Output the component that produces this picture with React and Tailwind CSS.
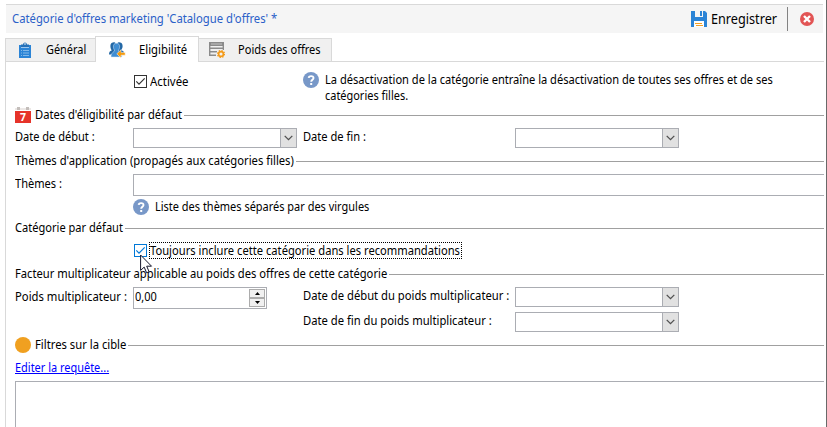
import { useLayoutEffect, useRef, useState } from "react";

// Single line of text, condensed horizontally so that it spans `w` pixels.
function T({ children, w, className = "", inner = "" }) {
  const ref = useRef(null);
  const [scale, setScale] = useState(1);
  useLayoutEffect(() => {
    setScale(w / ref.current.offsetWidth);
  }, []);
  return (
    <span className={`block shrink-0 whitespace-pre ${className}`} style={{ width: `${w}px` }}>
      <span ref={ref} className={`inline-block origin-left align-top ${inner}`} style={{ transform: `scaleX(${scale})` }}>
        {children}
      </span>
    </span>
  );
}

function Group({ title, w, icon }) {
  return (
    <div className="flex h-[17px] shrink-0 items-start gap-[2px]">
      {icon && <span className="mr-[2px] h-[17px] w-4 shrink-0">{icon}</span>}
      <T w={w}>{title}</T>
      <div className="mt-2 h-px flex-1 bg-[#a0a0a0]" />
    </div>
  );
}

function Combo() {
  return (
    <div className="flex h-5 w-[164px] shrink-0 justify-end border border-[#abadb3] bg-white">
      <div className="flex w-4 items-center justify-center border-l border-[#abadb3] bg-[#e1e1e1]">
        <svg width="9" height="6" viewBox="0 0 9 6" fill="none">
          <path d="M.7.9 4.5 4.6 8.3.9" stroke="#505050" strokeWidth="1.3" />
        </svg>
      </div>
    </div>
  );
}

function Help() {
  return (
    <svg className="shrink-0" width="16" height="16" viewBox="0 0 16 16" fill="none">
      <circle cx="8" cy="8" r="8" fill="#7898c8" />
      <path d="M5.7 5.9C5.8 3.7 10.5 3.4 10.5 6c0 1.7-2.3 1.8-2.3 3.8" stroke="#fff" strokeWidth="1.9" />
      <rect x="7.200" y="11" width="2" height="2" fill="#fff" />
    </svg>
  );
}

function Check({ box, mark }) {
  return (
    <svg className="shrink-0" width="13" height="13" viewBox="0 0 13 13" fill="none">
      <rect x=".5" y=".5" width="12" height="12" fill="#fff" stroke={box} />
      <path d="M2.300 6.400 5 9.100l5.700-5.800" stroke={mark} strokeWidth="1.200" />
    </svg>
  );
}

function Clipboard() {
  return (
    <svg width="12" height="16" viewBox="0 0 12 16">
      <path d="M0 3h12v13H0z" fill="#2b84d6" />
      <path d="M2 5V2.500h2C4.200-.3 7.800-.3 8 2.500h2V5z" fill="#2470b8" />
      <path d="M2 5.500h8" stroke="#cfe3f6" strokeWidth=".7" />
      <circle cx="6" cy="2" r=".8" fill="#fff" />
      <path d="M2 8.500h1M4 8.500h6M2 11h1M4 11h6M2 13.500h1M4 13.500h6" stroke="#8fc0ea" strokeWidth=".9" />
    </svg>
  );
}

function People() {
  return (
    <svg width="17" height="16" viewBox="0 0 17 16">
      <path d="M3 .8c1.500-1 3.200-.6 3.800.6L5.800 8l-1 4.500H0c0-2.500.8-3.300 2.700-4C2.800 7.600 1.400 7 1.400 4.400 1.400 2.500 2 1.500 3 .8z" fill="#2368a6" />
      <path d="M12 .8c-1.500-1-3.200-.6-3.800.6L9.200 8l1 3H15c0-1.500-.8-2.200-2.700-2.800-.1-1 1.300-1.600 1.300-3.800C13.600 2.500 13 1.500 12 .8z" fill="#2368a6" />
      <path d="M7.500 1.200c2.300 0 3.300 1.600 3.100 3.900-.1 1.600-.9 2.500-1.100 3.300 0 1.800 3.500 1.600 3.500 6.600H2c0-5 3.500-4.800 3.500-6.600-.2-.8-1-1.700-1.100-3.300-.2-2.300.8-3.900 3.100-3.900z" fill="#3f8dd2" stroke="#d6e7f6" strokeWidth=".5" />
      <path d="m7.800 11.800 4.200-4v2.600h4.200v2.800H12V16z" fill="#f59a0c" stroke="#fff" strokeWidth=".5" />
    </svg>
  );
}

function FormGear() {
  return (
    <svg width="16" height="16" viewBox="0 0 16 16" fill="none">
      <path d="M0 0h15v4H0zM0 5.500h15v1.500H0zM0 9h8v1.500H0zM0 12.500h7V14H0z" fill="#8b8b8b" />
      <path d="M2 2h11" stroke="#c9c9c9" strokeWidth=".9" />
      <path d="M.7 3v10M14.300 3v5" stroke="#8b8b8b" strokeWidth="1.400" />
      <circle cx="12" cy="12" r="4.500" fill="#f0f0f0" />
      <circle cx="12" cy="12" r="2.400" stroke="#f39b1b" strokeWidth="1.700" />
      <circle cx="12" cy="12" r="3.500" stroke="#f39b1b" strokeWidth="1.200" strokeDasharray="1.374 1.374" />
    </svg>
  );
}

function Floppy() {
  return (
    <svg width="16" height="16" viewBox="0 0 16 16">
      <path d="M0 0h14l2 2v14H0z" fill="#2b84d6" />
      <path d="M4 0h8v6H4z" fill="#f5f5f5" />
      <path d="M9 0h2v5H9z" fill="#2b84d6" />
      <path d="M3 10h10v6H3z" fill="#fff" />
      <path d="M4 12.500h7M5 14.500h7" stroke="#f2a024" />
    </svg>
  );
}

function Calendar() {
  return (
    <svg width="16" height="17" viewBox="0 0 16 17">
      <path d="M0 4h16v12H0z" fill="#e6332a" />
      <path d="M0 1h16v2H0z" fill="#ece8e6" />
      <path d="M2 0h3v3H2zM11 0h3v3h-3z" fill="#c4bebb" />
      <text x="8" y="14.300" textAnchor="middle" fontSize="10.500" fontWeight="700" fill="#fff" fontFamily="'Open Sans', sans-serif">7</text>
    </svg>
  );
}

export default function App() {
  return (
    <div className="relative flex h-[427px] w-[827px] flex-col overflow-hidden border-r border-[#696969] bg-white pl-[5px] pt-1 font-['Noto_Sans','Open_Sans',sans-serif] text-[12px] leading-4 text-black">
      <header className="ml-px mr-[3px] flex h-[29px] shrink-0 items-center border-t border-[#d9d9d9] bg-[#f5f5f5] pl-[6px]">
        <T w={265} className="text-[#2b5fc8]">Catégorie d'offres marketing 'Catalogue d'offres' *</T>
        <div className="ml-auto flex items-center">
          <Floppy />
          <T w={66} className="ml-1 text-[14px]">Enregistrer</T>
          <div className="ml-[10px] h-6 w-px bg-[#838383]" />
          <svg className="ml-3 mr-[9px]" width="14" height="14" viewBox="0 0 14 14">
            <circle cx="7" cy="7" r="7" fill="#e25555" />
            <path d="m4 4 6 6m0-6-6 6" stroke="#fff" strokeWidth="2.400" />
          </svg>
        </div>
      </header>

      <nav className="mr-[2px] mt-[3px] flex h-[26px] shrink-0 items-end">
        <div className="flex h-6 w-[90px] items-center border-b border-l border-t border-[#d9d9d9] bg-[#f0f0f0] pl-[13px]">
          <Clipboard />
          <T w={40} className="ml-[15px]">Général</T>
        </div>
        <div className="flex h-[26px] w-[104px] items-center border-x border-t border-[#d9d9d9] bg-white pl-[13px]">
          <People />
          <T w={48} className="ml-[13px]">Eligibilité</T>
        </div>
        <div className="flex h-6 w-[133px] items-center border-b border-r border-t border-[#d9d9d9] bg-[#f0f0f0] pl-[10px]">
          <FormGear />
          <T w={83} className="ml-[13px]">Poids des offres</T>
        </div>
        <div className="flex-1 self-stretch border-b border-[#d9d9d9]" />
      </nav>

      <main className="flex flex-1 flex-col border-l border-[#d9d9d9] pl-[9px] pr-[2px]">
        <div className="flex h-[45px] shrink-0 items-start pl-[119px] pt-[10px]">
          <div className="flex w-[169px] items-start pt-[2px]">
            <div className="pt-px"><Check box="#333" mark="#333" /></div>
            <T w={39} className="ml-[3px]">Activée</T>
          </div>
          <Help />
          <div className="ml-[6px] flex flex-col items-start">
            <T w={448}>La désactivation de la catégorie entraîne la désactivation de toutes ses offres et de ses</T>
            <T w={83}>catégories filles.</T>
          </div>
        </div>

        <Group title="Dates d'éligibilité par défaut" w={147} icon={<Calendar />} />
        <div className="flex h-[29px] shrink-0 items-start pt-1">
          <div className="w-[118px] pt-px"><T w={80}>Date de début :</T></div>
          <Combo />
          <div className="ml-[6px] w-[212px] pt-px"><T w={63}>Date de fin :</T></div>
          <Combo />
        </div>

        <Group title="Thèmes d'application (propagés aux catégories filles)" w={279} />
        <div className="flex h-[29px] shrink-0 items-start pt-1">
          <div className="w-[118px] pt-[2px]"><T w={47}>Thèmes :</T></div>
          <div className="h-[22px] flex-1 border-y border-l border-[#abadb3]" />
        </div>
        <div className="flex h-[21px] shrink-0 items-start pl-[118px]">
          <Help />
          <T w={214} className="ml-[6px]">Liste des thèmes séparés par des virgules</T>
        </div>

        <Group title="Catégorie par défaut" w={108} />
        <div className="flex h-[29px] shrink-0 items-start pl-[119px] pt-[5px]">
          <div className="pt-[2px]"><Check box="#0078d7" mark="#0078d7" /></div>
          <div className="ml-[2px] flex h-[17px] w-[313px] items-start border border-dotted border-black">
            <T w={310}>Toujours inclure cette catégorie dans les recommandations</T>
          </div>
        </div>

        <Group title="Facteur multiplicateur applicable au poids des offres de cette catégorie" w={372} />
        <div className="flex h-[54px] shrink-0 items-start pt-1">
          <div className="w-[118px] pt-[2px]"><T w={112}>Poids multiplicateur :</T></div>
          <div className="flex h-[22px] w-[134px] items-start justify-between border border-[#abadb3] p-px">
            <T w={22}>0,00</T>
            <div className="flex w-4 flex-col">
              <div className="flex h-[9px] items-center justify-center border border-[#acacac] bg-[#f0f0f0]">
                <svg width="5" height="3" viewBox="0 0 5 3"><path d="M2.500 0 5 3H0z" /></svg>
              </div>
              <div className="flex h-[9px] items-center justify-center border border-[#acacac] bg-[#f0f0f0]">
                <svg width="5" height="3" viewBox="0 0 5 3"><path d="M0 0h5L2.500 3z" /></svg>
              </div>
            </div>
          </div>
          <div className="ml-9 flex flex-col gap-[5px]">
            <div className="flex items-start">
              <div className="w-[212px] pt-px"><T w={206}>Date de début du poids multiplicateur :</T></div>
              <Combo />
            </div>
            <div className="flex items-start">
              <div className="w-[212px] pt-px"><T w={189}>Date de fin du poids multiplicateur :</T></div>
              <Combo />
            </div>
          </div>
        </div>

        <Group title="Filtres sur la cible" w={91} icon={<span className="block size-4 rounded-full bg-[#f0a020]" />} />
        <div className="flex h-[27px] shrink-0 items-start pt-[6px]">
          <T w={94} className="text-[#0000ff]" inner="underline">Editer la requête...</T>
        </div>
        <div className="flex-1 border-l border-t border-[#abadb3]" />
      </main>

      <svg className="absolute left-[140px] top-[254px]" width="13" height="20" viewBox="0 0 13 20">
        <path d="M.6 1v15.400l3.600-3.300 2.400 5.700 2.500-1.100-2.400-5.500h4.800z" fill="#fff" stroke="#15152a" />
      </svg>
    </div>
  );
}
